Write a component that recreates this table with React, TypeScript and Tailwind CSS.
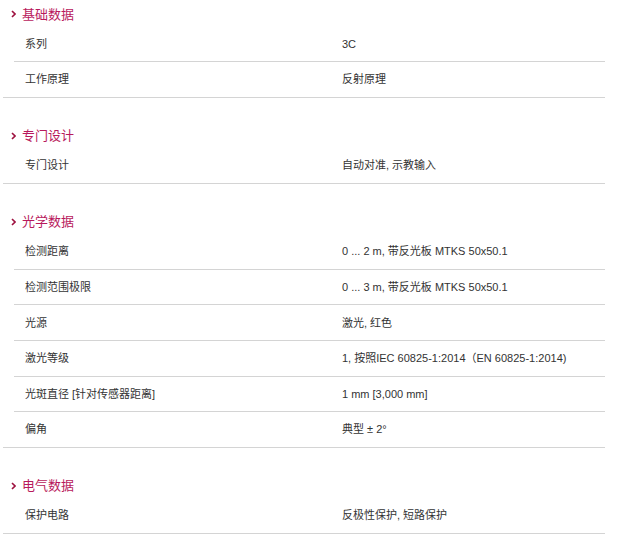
import React, { FC } from 'react';

interface Section {
  title: string;
  rows: [string, string][];
}

const sections: Section[] = [
  {
    title: '基础数据',
    rows: [
      ['系列', '3C'],
      ['工作原理', '反射原理'],
    ],
  },
  {
    title: '专门设计',
    rows: [['专门设计', '自动对准, 示教输入']],
  },
  {
    title: '光学数据',
    rows: [
      ['检测距离', '0 ... 2 m, 带反光板 MTKS 50x50.1'],
      ['检测范围极限', '0 ... 3 m, 带反光板 MTKS 50x50.1'],
      ['光源', '激光, 红色'],
      ['激光等级', '1, 按照IEC 60825-1:2014（EN 60825-1:2014)'],
      ['光斑直径 [针对传感器距离]', '1 mm [3,000 mm]'],
      ['偏角', '典型 ± 2°'],
    ],
  },
  {
    title: '电气数据',
    rows: [['保护电路', '反极性保护, 短路保护']],
  },
];

const Chevron: FC = () => (
  <svg width="5" height="8" viewBox="0 0 5 8" className="mr-[6px] shrink-0">
    <path d="M1 1 L4 4 L1 7" fill="none" stroke="#9e1240" strokeWidth="1.6" />
  </svg>
);

const SpecSection: FC<{ section: Section; first: boolean }> = ({ section, first }) => (
  <div className={first ? 'border-b border-[#d4d4d4]' : 'mt-6 border-b border-[#d4d4d4]'}>
    <div className="flex h-[26.5px] items-center pl-[8px] pt-[2px] text-[13px] text-[#b8195c]">
      <Chevron />
      <span>{section.title}</span>
    </div>
    {section.rows.map(([label, value], i) => {
      const last = i === section.rows.length - 1;
      return (
        <div
          key={label}
          className={
            last
              ? 'ml-[11px] flex h-[34.6px] items-center text-[11px] text-[#333]'
              : 'ml-[11px] flex h-[35.6px] items-center border-b border-[#d4d4d4] text-[11px] text-[#333]'
          }
        >
          <div className="w-[328px] shrink-0 pl-[11px]">{label}</div>
          <div>{value}</div>
        </div>
      );
    })}
  </div>
);

const App: FC = () => {
  return (
    <div
      className="min-h-[552px] w-[637px] bg-white pl-[3px]"
      style={{ fontFamily: '"Liberation Sans", "Noto Sans CJK SC", sans-serif' }}
    >
      <div className="w-[602px]">
        {sections.map((s, i) => (
          <SpecSection key={s.title} section={s} first={i === 0} />
        ))}
      </div>
    </div>
  );
};

export default App;
